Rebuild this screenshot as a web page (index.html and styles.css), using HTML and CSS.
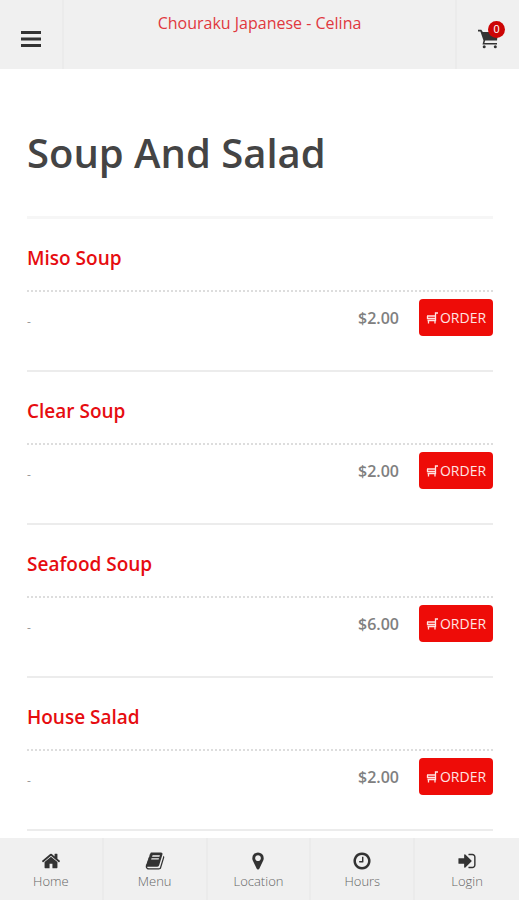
FILE: index.html
```html
<!DOCTYPE html>
<html lang="en">
<head>
<meta charset="utf-8">
<meta name="viewport" content="width=device-width, initial-scale=1">
<title>Chouraku Japanese - Celina</title>
<link rel="stylesheet" href="styles.css">
</head>
<body>
<svg class="sprite" aria-hidden="true">
  <symbol id="order-cart" viewBox="0 0 12 12">
    <path d="M12 1h-2.500v7.500H1.500M1 4h8.500M1.500 4v2.500h8M2.500 8.500v3M9 8.500v3" fill="none" stroke="currentColor" stroke-width="1.300"/>
  </symbol>
</svg>
<header class="topbar">
  <button class="topbar-button menu-button" type="button" aria-label="Open menu">
    <svg class="bars" viewBox="0 0 20 18" aria-hidden="true"><path d="M0 1h20v3H0zM0 7.500h20v3H0zM0 14h20v3H0z" fill="currentColor"/></svg>
  </button>
  <a class="brand" href="#">Chouraku Japanese - Celina</a>
  <button class="topbar-button cart-button" type="button" aria-label="Cart, 0 items">
    <span class="cart">
      <svg class="cart-icon" viewBox="0 0 20 20" aria-hidden="true">
        <path d="M0 .8h3.300l1.500 2.200H20l-1 8.500H7.200l-.8 2.400H19v1.700H4.500l1-4L2.400 2.600H0z" fill="currentColor"/>
        <circle cx="6.200" cy="17.800" r="1.500" fill="currentColor"/><circle cx="17.300" cy="17.800" r="1.500" fill="currentColor"/>
      </svg>
      <span class="badge">0</span>
    </span>
  </button>
</header>
<main class="content">
  <h1 class="title">Soup And Salad</h1>
  <ul class="items">
    <li class="item">
      <h2 class="item-name">Miso Soup</h2>
      <div class="item-row"><p class="note">-</p><span class="price">$2.00</span><button class="order" type="button"><svg class="order-icon" aria-hidden="true"><use href="#order-cart"/></svg>ORDER</button></div>
    </li>
    <li class="item">
      <h2 class="item-name">Clear Soup</h2>
      <div class="item-row"><p class="note">-</p><span class="price">$2.00</span><button class="order" type="button"><svg class="order-icon" aria-hidden="true"><use href="#order-cart"/></svg>ORDER</button></div>
    </li>
    <li class="item">
      <h2 class="item-name">Seafood Soup</h2>
      <div class="item-row"><p class="note">-</p><span class="price">$6.00</span><button class="order" type="button"><svg class="order-icon" aria-hidden="true"><use href="#order-cart"/></svg>ORDER</button></div>
    </li>
    <li class="item">
      <h2 class="item-name">House Salad</h2>
      <div class="item-row"><p class="note">-</p><span class="price">$2.00</span><button class="order" type="button"><svg class="order-icon" aria-hidden="true"><use href="#order-cart"/></svg>ORDER</button></div>
    </li>
  </ul>
</main>
<nav class="tabs" aria-label="Main">
  <a class="tab" href="#"><svg class="tab-icon" viewBox="0 0 1792 1792" aria-hidden="true"><path d="M1472 992v480q0 26-19 45t-45 19h-384v-384h-256v384h-384q-26 0-45-19t-19-45v-480q0-1 .5-3t.5-3l575-474 575 474q1 2 1 6zm223-69l-62 74q-8 9-21 11h-3q-13 0-21-7l-692-577-692 577q-12 8-24 7-13-2-21-11l-62-74q-8-10-7-23.500t11-21.500l719-599q32-26 76-26t76 26l244 204v-195q0-14 9-23t23-9h192q14 0 23 9t9 23v408l219 182q10 8 11 21.500t-7 23.500z"/></svg>Home</a>
  <a class="tab" href="#"><svg class="tab-icon" viewBox="0 0 1792 1792" aria-hidden="true"><path d="M1703 478q40 57 18 129l-275 906q-19 64-76.500 107.500t-122.500 43.500h-923q-77 0-148.500-53.500t-99.500-131.500q-24-67-2-127 0-4 3-27t4-37q1-8-3-21.500t-3-19.500q2-11 8-21t16.500-23.500 16.500-23.500q23-38 45-91.500t30-91.500q3-10 .5-30t-.5-28q3-11 17-28t17-23q21-36 42-92t25-90q1-9-2.500-32t.5-28q4-13 22-30.500t22-22.500q19-26 42.500-84.500t27.500-96.500q1-8-3-25.500t-2-26.500q2-8 9-18t18-23 17-21q8-12 16.500-30.500t15-35 16-36 19.500-32 26.500-23.500 36-11.500 47.500 5.500l-1 3q38-9 51-9h761q74 0 114 56t18 130l-274 906q-36 119-71.500 153.500t-128.500 34.500h-869q-27 0-38 15-11 16-1 43 24 70 144 70h923q29 0 56-15.500t35-41.500l300-987q7-22 5-57 38 15 59 43zm-1064 2q-4 13 2 22.500t20 9.500h608q13 0 25.500-9.500t16.500-22.500l21-64q4-13-2-22.500t-20-9.500h-608q-13 0-25.500 9.500t-16.500 22.500zm-83 256q-4 13 2 22.500t20 9.500h608q13 0 25.500-9.500t16.500-22.500l21-64q4-13-2-22.500t-20-9.500h-608q-13 0-25.500 9.500t-16.500 22.500z"/></svg>Menu</a>
  <a class="tab" href="#"><svg class="tab-icon" viewBox="0 0 1792 1792" aria-hidden="true"><path d="M1152 640q0-106-75-181t-181-75-181 75-75 181 75 181 181 75 181-75 75-181zm256 0q0 109-33 179l-364 774q-16 33-47.500 52t-67.500 19-67.500-19-46.500-52l-365-774q-33-70-33-179 0-212 150-362t362-150 362 150 150 362z"/></svg>Location</a>
  <a class="tab" href="#"><svg class="tab-icon" viewBox="0 0 1792 1792" aria-hidden="true"><path d="M1024 544v448q0 14-9 23t-23 9h-320q-14 0-23-9t-9-23v-64q0-14 9-23t23-9h224v-352q0-14 9-23t23-9h64q14 0 23 9t9 23zm416 352q0-148-73-273t-198-198-273-73-273 73-198 198-73 273 73 273 198 198 273 73 273-73 198-198 73-273zm224 0q0 209-103 385.500t-279.500 279.500-385.500 103-385.500-103-279.500-279.500-103-385.500 103-385.500 279.500-279.500 385.500-103 385.500 103 279.500 279.500 103 385.500z"/></svg>Hours</a>
  <a class="tab" href="#"><svg class="tab-icon" viewBox="0 0 1792 1792" aria-hidden="true"><path d="M1312 896q0 26-19 45l-544 544q-19 19-45 19t-45-19-19-45v-288h-448q-26 0-45-19t-19-45v-384q0-26 19-45t45-19h448v-288q0-26 19-45t45-19 45 19l544 544q19 19 19 45zm352-352v704q0 119-84.500 203.500t-203.500 84.500h-320q-13 0-22.500-9.500t-9.500-22.500q0-4-1-20t-.5-26.500 3-23.500 10-19.500 20.500-6.500h320q66 0 113-47t47-113v-704q0-66-47-113t-113-47h-312l-11.500-1-11.500-3-8-5.500-7-9-2-13.500q0-4-1-20t-.5-26.500 3-23.500 10-19.500 20.500-6.500h320q119 0 203.500 84.500t84.500 203.500z"/></svg>Login</a>
</nav>
</body>
</html>
```
FILE: styles.css
```css
* { box-sizing: border-box; }

body {
  margin: 0;
  min-height: 100vh;
  display: flex;
  flex-direction: column;
  background: #fff;
  color: #444;
  font-family: "Open Sans", sans-serif;
}

.sprite { display: none; }

.topbar {
  position: sticky;
  top: 0;
  z-index: 1;
  display: flex;
  height: 69px;
  background: #f0f0f0;
}

.topbar-button {
  width: 64px;
  padding: 8px 0 0;
  border: 0;
  background: none;
  color: #333;
  display: flex;
  align-items: center;
  justify-content: center;
}

.menu-button { border-right: 2px solid #ebebeb; }
.cart-button { border-left: 2px solid #ebebeb; }

.bars { width: 20px; height: 18px; }

.brand {
  flex: 1;
  padding-top: 11px;
  text-align: center;
  color: #e0383e;
  font-size: 16px;
  line-height: 24px;
  text-decoration: none;
}

.cart { position: relative; display: block; }
.cart-icon { display: block; width: 20px; height: 20px; }

.badge {
  position: absolute;
  top: -8px;
  right: -7px;
  width: 17px;
  height: 17px;
  border-radius: 50%;
  background: #cc0505;
  color: #fff;
  font-size: 11px;
  line-height: 17px;
  text-align: center;
}

.content { flex: 1; padding: 0 26px 7px 27px; }

.title {
  margin: 0;
  padding: 56px 0 36px;
  border-bottom: 3px solid #f6f6f6;
  font-size: 40px;
  line-height: 55px;
  font-weight: 600;
}

.items { margin: 0; padding: 0; list-style: none; }
.item { border-bottom: 2px solid #ececec; }

.item-name {
  margin: 0;
  padding: 26px 0 19px;
  border-bottom: 2px dotted #ddd;
  color: #e60c10;
  font-size: 19px;
  line-height: 26px;
  font-weight: 600;
}

.item-row {
  display: flex;
  align-items: center;
  gap: 20px;
  padding: 7px 0 34px;
}

.note { flex: 1; margin: 0; color: #999; font-size: 12px; line-height: 24px; padding-top: 8px; }
.price { color: #808080; font-size: 16px; line-height: 24px; font-weight: 600; }

.order {
  display: flex;
  align-items: center;
  justify-content: center;
  gap: 2px;
  width: 74px;
  height: 37px;
  padding: 0;
  border: 0;
  border-radius: 4px;
  background: #ee0c08;
  color: #ffe4e2;
  font: 14px/20px "Open Sans", sans-serif;
}

.order-icon { width: 12px; height: 12px; }

.tabs {
  position: sticky;
  bottom: 0;
  display: grid;
  grid-template-columns: repeat(5, 1fr);
  height: 62px;
  background: #f0f0f0;
}

.tab {
  display: flex;
  flex-direction: column;
  align-items: center;
  padding-top: 13px;
  border-right: 2px solid #ebebeb;
  color: #666;
  font-size: 13px;
  font-weight: 300;
  line-height: 20px;
  text-decoration: none;
}

.tab:last-child { border-right: 0; }
.tab-icon { width: 20px; height: 20px; fill: #333; }
```
